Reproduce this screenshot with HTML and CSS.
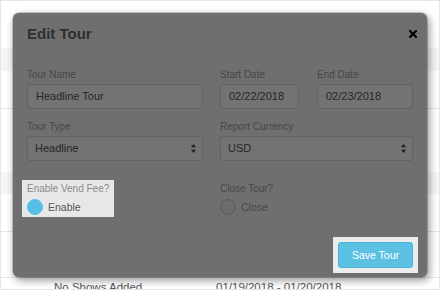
FILE: index.html
```html
<!DOCTYPE html>
<html>
<head>
<meta charset="utf-8">
<link rel="stylesheet" href="styles.css">
</head>
<body>
<div class="page">
  <div class="bg-top"></div>
  <div class="bg-band"></div>
  <div class="bg-row bg-r1"></div>
  <div class="bg-row bg-r2"></div>
  <div class="bg-band bg-band2"></div>
  <div class="bg-row bg-r3"></div>
  <div class="bg-row bg-r4"></div>
  <div class="bg-text">
    <span>No Shows Added</span>
    <span>01/19/2018 - 01/20/2018</span>
  </div>

  <div class="modal">
    <div class="modal-header">
      <h1 class="modal-title">Edit Tour</h1>
      <svg class="close" width="8" height="8" viewBox="0 0 8 8"><path d="M1 1L7 7M7 1L1 7" stroke="#000" stroke-width="2.2" stroke-linecap="square"/></svg>
    </div>

    <div class="form-row">
      <div class="field">
        <label class="lbl">Tour Name</label>
        <div class="input">Headline Tour</div>
      </div>
      <div class="dates">
        <div class="field">
          <label class="lbl">Start Date</label>
          <div class="input">02/22/2018</div>
        </div>
        <div class="field">
          <label class="lbl">End Date</label>
          <div class="input">02/23/2018</div>
        </div>
      </div>
    </div>

    <div class="form-row row-gap">
      <div class="field">
        <label class="lbl">Tour Type</label>
        <div class="input select"><span>Headline</span><svg class="arrows" width="5" height="9" viewBox="0 0 5 9"><path d="M2.5 0L5 3.3H0Z M2.5 9L5 5.7H0Z" fill="#1e1e1e"/></svg></div>
      </div>
      <div class="field">
        <label class="lbl">Report Currency</label>
        <div class="input select"><span>USD</span><svg class="arrows" width="5" height="9" viewBox="0 0 5 9"><path d="M2.5 0L5 3.3H0Z M2.5 9L5 5.7H0Z" fill="#1e1e1e"/></svg></div>
      </div>
    </div>

    <div class="form-row radio-row">
      <div class="radio-cell highlight">
        <label class="lbl lbl-light">Enable Vend Fee?</label>
        <div class="radio"><span class="dot dot-on"></span><span class="radio-text radio-text-on">Enable</span></div>
      </div>
      <div class="radio-cell">
        <label class="lbl">Close Tour?</label>
        <div class="radio"><span class="dot"></span><span class="radio-text">Close</span></div>
      </div>
    </div>

    <div class="modal-footer">
      <div class="btn-wrap">
        <button class="btn">Save Tour</button>
      </div>
    </div>
  </div>
</div>
</body>
</html>
```

FILE: styles.css
```css
* { box-sizing: border-box; }
html, body { margin: 0; padding: 0; }
body {
  width: 440px;
  height: 290px;
  overflow: hidden;
  background: #fff;
  font-family: "Liberation Sans", Arial, Helvetica, sans-serif;
}
.page {
  position: relative;
  width: 440px;
  height: 290px;
  border: 1px solid #e6e6e6;
  overflow: hidden;
}
.bg-top { height: 47px; }
.bg-band { height: 23px; background: #f5f5f5; }
.bg-band2 { height: 22px; }
.bg-row { border-bottom: 1px solid #e6e6e6; }
.bg-r1 { height: 38px; }
.bg-r2 { height: 63px; border-bottom: 0; }
.bg-r3 { height: 38px; }
.bg-r4 { height: 46px; }
.bg-text {
  display: grid;
  grid-template-columns: 162px auto;
  padding-left: 53px;
  padding-top: 1px;
  font-size: 11.5px;
  line-height: 16px;
  color: #555;
}

.modal {
  position: absolute;
  left: 12px;
  top: 12px;
  width: 414px;
  height: 264px;
  background: #6f6f6f;
  border-radius: 6px;
  box-shadow: 0 0 0 1px rgba(0,0,0,0.18), 2px 3px 8px rgba(0,0,0,0.45);
  padding: 12px 14px 0 14px;
}
.modal-header {
  display: flex;
  align-items: center;
  justify-content: space-between;
  height: 18px;
  margin-bottom: 26px;
}
.modal-title {
  margin: 0;
  font-size: 15px;
  line-height: 18px;
  font-weight: bold;
  color: #2f2f2f;
}
.close { margin-right: -4px; margin-top: -1px; }

.form-row {
  display: grid;
  grid-template-columns: 176px 193px;
  column-gap: 17px;
}
.row-gap { margin-top: 12px; }
.dates {
  display: grid;
  grid-template-columns: 79px 96px;
  column-gap: 18px;
}
.field { display: flex; flex-direction: column; }
.lbl {
  font-size: 10px;
  line-height: 12px;
  color: #474747;
  margin-bottom: 3px;
}
.input {
  height: 25px;
  background: #737373;
  border: 1px solid #626262;
  border-radius: 3px;
  padding: 0 8px;
  font-size: 11px;
  line-height: 23px;
  color: #262626;
  white-space: nowrap;
}
.select {
  display: flex;
  align-items: center;
  justify-content: space-between;
  padding: 0 6px 0 7px;
}
.radio-row { margin-top: 19px; }
.radio-cell {
  justify-self: start;
  margin-left: -5px;
  padding: 3px 5px 2px;
  display: flex;
  flex-direction: column;
}
.radio-cell .lbl { margin-bottom: 4px; }
.highlight { background: #e7e7e7; }
.lbl-light { color: #8a8a8a; }
.radio {
  display: flex;
  align-items: center;
  gap: 5px;
  height: 16px;
}
.dot {
  width: 16px;
  height: 16px;
  border-radius: 50%;
  border: 1px solid #5c5c5c;
  background: #6c6c6c;
}
.dot-on { background: #56bfe5; border-color: #56bfe5; }
.radio-text {
  font-size: 10.5px;
  line-height: 16px;
  color: #474747;
}
.radio-text-on { color: #555; }

.modal-footer {
  display: flex;
  justify-content: flex-end;
  margin-top: 20px;
  margin-right: -5px;
}
.btn-wrap {
  background: #ececec;
  padding: 5px;
}
.btn {
  display: block;
  width: 75px;
  height: 26px;
  background: #5bc0e2;
  border: 1px solid #45b3dc;
  border-radius: 3px;
  color: #fff;
  font-family: "Liberation Sans", Arial, Helvetica, sans-serif;
  font-size: 10.5px;
  padding: 0;
}
```
